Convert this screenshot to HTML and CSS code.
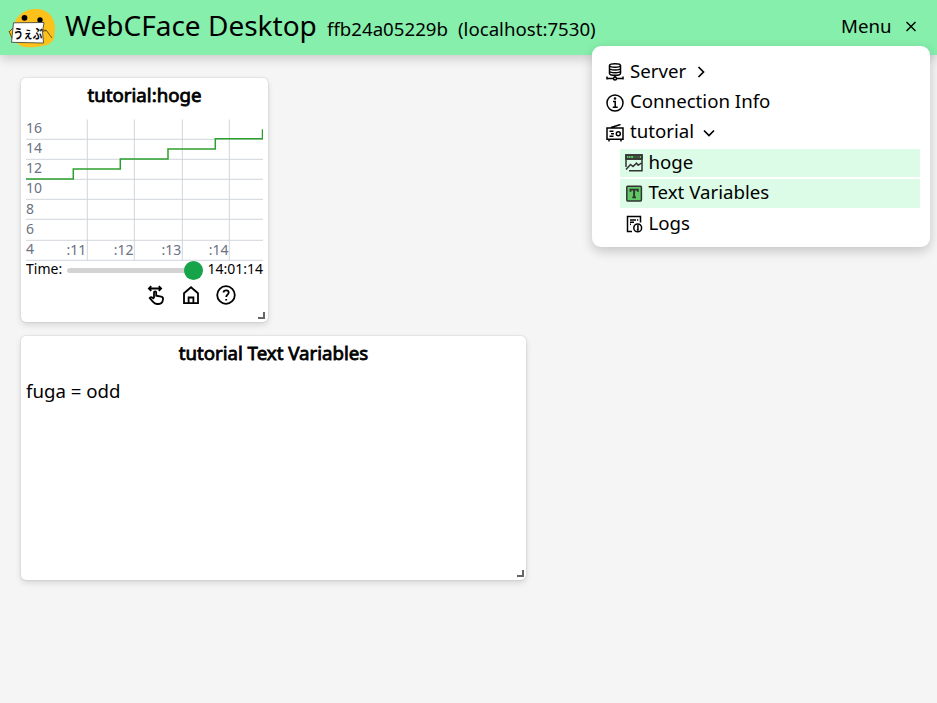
FILE: index.html
```html
<!DOCTYPE html>
<html lang="en">
<head>
<meta charset="utf-8">
<title>WebCFace Desktop</title>
<link rel="stylesheet" href="styles.css">
</head>
<body>
<header class="header">
  <svg class="logo" viewBox="0 0 48 40" width="48" height="40">
    <path d="M5 22C6 9 15 1 28 1c12 0 19 8 19 20-1 3 0 6-1 9-2 6-8 8-18 9-9 1-19 0-20-7L2 27l-1-4z" fill="#fcc21b"/>
    <circle cx="16.500" cy="9.800" r="2.900"/><circle cx="32" cy="12" r="2.700"/>
    <path d="M5.500 14.800l30.500-.3-1.500 9 1 11.500-32-.7z" fill="#fff" stroke="#333" stroke-width=".8"/>
    <path d="M1 24l4-4M1 23l3 7M34 24l4-2 6 8M33 21l5 2" fill="none" stroke="#6d5212" stroke-width="1"/>
    <text class="logo-text" x="5.500" y="29.500" textLength="29" lengthAdjust="spacingAndGlyphs">うぇぶ</text>
  </svg>
  <h1 class="brand">WebCFace Desktop</h1>
  <span class="host">ffb24a05229b</span>
  <span class="addr">(localhost:7530)</span>
  <button class="menu-button">Menu
    <svg class="close" viewBox="0 0 12 12" width="12" height="12"><path d="M1.500 2l9 9M10.500 2l-9 9"/></svg>
  </button>
</header>

<nav class="menu">
  <div class="row">
    <svg class="icon" viewBox="0 0 18 18"><path d="M3.500 2.500v8c0 1 2.200 1.800 5.500 1.800s5.500-.8 5.500-1.800v-8M3.500 5.200c0 1 2.200 1.700 5.500 1.700s5.500-.7 5.500-1.700M3.500 8c0 1 2.200 1.700 5.500 1.700S14.500 9 14.500 8M9 12.300v2.200M.5 15.500h6.800M10.700 15.500h6.800M1 13.500v3M17 13.500v3"/><ellipse cx="9" cy="2.500" rx="5.500" ry="1.700"/><circle cx="9" cy="15.500" r="1.500"/></svg>
    <span>Server</span>
    <svg class="chevron" viewBox="0 0 14 14"><path d="M4.500 2l5 5-5 5"/></svg>
  </div>
  <div class="row">
    <svg class="icon" viewBox="0 0 18 18"><circle cx="9" cy="9" r="8"/><path d="M7 7.400h2.200v5.800M6.700 13.200h5"/><circle cx="9" cy="4.500" r=".6"/></svg>
    <span>Connection Info</span>
  </div>
  <div class="row">
    <svg class="icon" viewBox="0 0 18 18"><path d="M1 4h16v11.300H1zM3 15v2.500M15 15v2.500M5 3.500l9.500-3M3.500 7.200h4M5 9.700h3M3.500 12.200h4"/><circle cx="12.300" cy="9.700" r="2"/></svg>
    <span>tutorial</span>
    <svg class="chevron" viewBox="0 0 14 14"><path d="M2 4.500l5 5 5-5"/></svg>
  </div>
  <div class="row child active">
    <svg class="icon tinted" viewBox="0 0 18 18"><path d="M1 1h16v4H1z" fill="#5fc763"/><path d="M1 13V1h16v15.800H4M1 5h16M3 3h.7M5.500 3h.7M8 3h7M1 15.500l4.500-5 2.500 2 3.500-3.300 1.700 2 3.300-2.200"/></svg>
    <span>hoge</span>
  </div>
  <div class="row child active">
    <svg class="icon tinted" viewBox="0 0 18 18"><rect x="1.800" y="1.300" width="14.600" height="14.600" rx=".8" fill="#5fc763"/><path d="M5.500 6.800V4.600h7.300v2.200M9.100 4.500v7.800M7.300 12.400h3.700" stroke-width="1.900"/></svg>
    <span>Text Variables</span>
  </div>
  <div class="row child">
    <svg class="icon" viewBox="0 0 18 18"><path d="M7 16.500H2.500v-15h13v6M5 5h6M5 7.300h4M12 5h1.200M5 9.200h1"/><circle cx="12.700" cy="12.900" r="3.900"/><path d="M12.200 10.800h.7v4.200M11.800 15h2"/></svg>
    <span>Logs</span>
  </div>
</nav>

<main class="desktop">
  <section class="card small">
    <h2 class="card-title">tutorial:hoge</h2>
    <svg class="chart" viewBox="0 0 237 142" width="237" height="142">
      <path class="grid" d="M0 20.300h237M0 40.300h237M0 60.300h237M0 80.300h237M0 100.300h237M0 121.300h237M0 141.300h237M61.300 .500v141M108.300 .500v141M156.300 .500v141M203.300 .500v141"/>
      <path class="line" d="M0 60.100h47.300v-10h47v-10H142v-10h47.300V19.800H236.500v-9.500"/>
      <g class="ticks">
        <text x="0" y="14">16</text><text x="0" y="34">14</text><text x="0" y="54">12</text><text x="0" y="74">10</text><text x="0" y="95">8</text><text x="0" y="115">6</text><text x="0" y="135">4</text>
        <g text-anchor="end"><text x="60.300" y="136">:11</text><text x="107.600" y="136">:12</text><text x="155.200" y="136">:13</text><text x="202.600" y="136">:14</text></g>
      </g>
    </svg>
    <div class="time">
      <span>Time:</span>
      <div class="slider"><div class="thumb"></div></div>
      <span>14:01:14</span>
    </div>
    <div class="tools">
      <svg class="tool" viewBox="0 0 20 20"><path d="M3 3.500h12M5.200 1.200L2.900 3.500l2.300 2.300M12.800 1.200l2.300 2.300-2.300 2.300M8 13V7.500c0-1.600 2.200-1.600 2.200 0v3.200l5 1c1.500.4 2 1.400 1.800 2.700-.3 2.700-1.700 4.600-4.300 4.600H11c-1.800 0-3-.8-4-2.200l-3.300-3.800c1.200-1.300 2.600-.9 4.300.8"/></svg>
      <svg class="tool" viewBox="0 0 20 20"><path d="M3 8.200L10 2.300l7 5.900v9.900H3zM7.600 18v-5.500h4.800V18"/></svg>
      <svg class="tool" viewBox="0 0 20 20"><circle cx="10" cy="10" r="8.800"/><path d="M7.500 7.500c.2-3 5.200-2.900 5.200 0 0 2-2.500 2.200-2.500 4.500M10.200 13.900v1.500"/></svg>
    </div>
    <div class="grip"></div>
  </section>

  <section class="card wide">
    <h2 class="card-title">tutorial Text Variables</h2>
    <p class="variable">fuga = odd</p>
    <div class="grip"></div>
  </section>
</main>
</body>
</html>
```

FILE: styles.css
```css
* { box-sizing: border-box; }
body {
  margin: 0;
  height: 703px;
  overflow: hidden;
  background: #f5f5f5;
  color: #000;
  font: 18.670px/28px "Noto Sans", "Noto Sans CJK JP", sans-serif;
}
.header {
  display: flex;
  align-items: baseline;
  height: 55px;
  padding: 0 20px 0 8px;
  background: #86efac;
  box-shadow: 0 4px 10px rgba(0, 0, 0, .17);
  white-space: nowrap;
}
.logo { align-self: center; flex: none; margin-right: 9px; }
.logo-text { font: bold 13px "Noto Sans CJK JP", sans-serif; }
.brand { margin: 0; width: 262px; font-size: 28px; line-height: 51px; font-weight: 400; }
.host { width: 131px; }
.addr { width: 140px; }
.menu-button {
  display: flex;
  align-items: center;
  gap: 13.500px;
  margin-left: auto;
  padding: 0;
  border: 0;
  background: none;
  color: inherit;
  font: inherit;
  position: relative;
  top: -3px;
}
.close { fill: none; stroke: #000; stroke-width: 1.400; }
.menu {
  position: absolute;
  top: 46px;
  right: 7px;
  width: 338px;
  height: 201px;
  padding: 11.800px 10px 0 13px;
  display: flex;
  flex-direction: column;
  gap: 2px;
  border-radius: 9px;
  background: #fff;
  box-shadow: 0 4px 12px rgba(0, 0, 0, .2);
}
.row { display: flex; align-items: center; height: 28.400px; padding-left: 1px; }
.row span { position: relative; top: -1.400px; }
.child { margin-left: 15px; padding-left: 5px; }
.active { background: #dcfce7; }
.icon {
  width: 18px;
  height: 18px;
  margin-right: 6px;
  position: relative;
  top: .2px;
  fill: none;
  stroke: #000;
  stroke-width: 1.500;
}
.child .icon { margin-right: 5.500px; }
.tinted { stroke: #333; }
.chevron { width: 14px; height: 14px; margin-left: 8px; fill: none; stroke: #000; stroke-width: 1.700; }
.desktop { display: flex; flex-direction: column; gap: 14px; padding: 23px 0 0 21px; }
.card {
  position: relative;
  height: 244px;
  padding: 3px 5px 0;
  border-radius: 5px;
  background: #fff;
  box-shadow: 0 0 2px rgba(0, 0, 0, .18), 0 3px 6px rgba(0, 0, 0, .12);
}
.small { width: 247px; }
.wide { width: 505px; }
.card-title {
  margin: 0;
  text-align: center;
  font-size: 18.670px;
  font-weight: 400;
  -webkit-text-stroke: .8px #000;
}
.chart { display: block; margin-top: 10px; }
.grid { fill: none; stroke: #d1d5db; stroke-width: 1; }
.line { fill: none; stroke: #2ca02c; stroke-width: 1.500; }
.ticks { font-size: 14px; fill: #6b7280; }
.time { display: flex; align-items: center; justify-content: space-between; height: 17px; font-size: 14px; line-height: 16px; }
.time span { position: relative; top: -.8px; }
.slider { position: relative; top: .5px; width: 136px; height: 5px; border-radius: 3px; background: #d3d3d3; }
.thumb { position: absolute; right: 0; top: -7px; width: 19px; height: 19px; border-radius: 50%; background: #16a34a; }
.tools { display: flex; gap: 15px; margin: 7px 0 0 120px; }
.tool { width: 20px; height: 20px; fill: none; stroke: #000; stroke-width: 1.800; }
.grip { position: absolute; right: 3px; bottom: 3px; width: 7px; height: 7px; border: solid #666; border-width: 0 2.500px 2.500px 0; }
.wide .grip { right: 2px; }
.variable { margin: 10px 0 0; }
```
